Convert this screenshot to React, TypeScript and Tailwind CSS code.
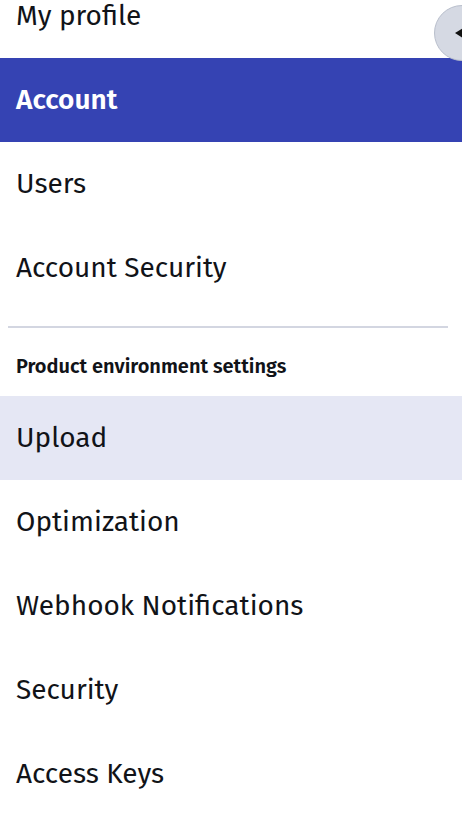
import React from "react";

const accountItems = ["My profile", "Account", "Users", "Account Security"];
const productItems = [
  "Upload",
  "Optimization",
  "Webhook Notifications",
  "Security",
  "Access Keys",
];

function NavItem({
  label,
  active,
  hovered,
}: {
  label: string;
  active?: boolean;
  hovered?: boolean;
}) {
  return (
    <div
      className={
        "flex h-[84px] items-center px-4 text-[28px] " +
        (active
          ? "bg-[#3543b3] font-semibold text-white"
          : hovered
          ? "bg-[#e5e7f4] text-[#111318]"
          : "text-[#111318]")
      }
    >
      {label}
    </div>
  );
}

export default function App() {
  return (
    <div
      className="relative h-[818px] w-[462px] overflow-hidden bg-white"
      style={{ fontFamily: '"Fira Sans", "Noto Sans", "Open Sans", sans-serif' }}
    >
      <nav className="-mt-[26px] flex flex-col">
        {accountItems.map((item) => (
          <NavItem key={item} label={item} active={item === "Account"} />
        ))}
        <div className="ml-2 mr-[14px] mt-4 h-[2px] bg-[#d3d6e1]" />
        <div className="flex h-[68px] items-center px-4 pt-[8px] text-[20px] font-semibold text-[#111318]">
          Product environment settings
        </div>
        {productItems.map((item) => (
          <NavItem key={item} label={item} hovered={item === "Upload"} />
        ))}
      </nav>

      {/* collapse toggle */}
      <button className="absolute left-[434px] top-[5px] flex h-[56px] w-[56px] items-center rounded-full border border-[#b9bfcc] bg-[#d5d9e3] pl-[20px]">
        <svg width="8" height="10" viewBox="0 0 8 10">
          <path d="M8 0 L0 5 L8 10 Z" fill="#111" />
        </svg>
      </button>
    </div>
  );
}
